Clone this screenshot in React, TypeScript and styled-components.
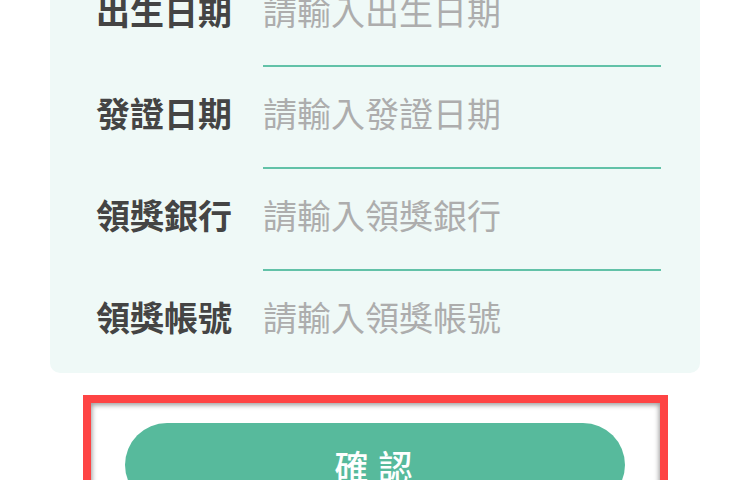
import React from 'react';
import styled, { createGlobalStyle } from 'styled-components';

const GlobalStyle = createGlobalStyle`
  html, body {
    margin: 0;
    padding: 0;
    overflow: hidden;
    background: #ffffff;
  }
  body {
    font-family: 'Noto Sans CJK TC', 'Noto Sans', sans-serif;
  }
`;

const Page = styled.div`
  display: flex;
  flex-direction: column;
  align-items: center;
  margin-top: -55px;
`;

const FormCard = styled.div`
  width: 650px;
  box-sizing: border-box;
  padding: 20px 39px 0 46px;
  background-color: #eff9f7;
  border-radius: 10px;
`;

const FieldRow = styled.div`
  display: flex;
  align-items: center;
`;

const FieldLabel = styled.label`
  flex: none;
  width: 136px;
  margin-right: 31px;
  padding-bottom: 10px;
  font-size: 34px;
  line-height: 1;
  font-weight: 700;
  color: #444444;
  white-space: nowrap;
`;

const FieldInput = styled.input<{ $last?: boolean }>`
  flex: 1;
  min-width: 0;
  height: 102px;
  box-sizing: border-box;
  padding: 0 0 10px;
  border: none;
  border-bottom: 2px solid ${(p) => (p.$last ? 'transparent' : '#62c2a8')};
  background: transparent;
  outline: none;
  font-family: inherit;
  font-size: 34px;
  color: #333333;
  &::placeholder {
    color: #adadad;
  }
`;

const HighlightFrame = styled.div`
  margin-top: 22px;
  width: 585px;
  box-sizing: border-box;
  padding: 20px 34px;
  border: 8px solid #fe4444;
  box-shadow: inset 0 1px 5px 1px rgba(0, 0, 0, 0.4);
  background: #ffffff;
`;

const ConfirmButton = styled.button`
  display: block;
  width: 500px;
  height: 84px;
  border: none;
  border-radius: 42px;
  background-color: #57ba9c;
  color: #ffffff;
  font-family: inherit;
  font-size: 34px;
  font-weight: 500;
  letter-spacing: 10px;
  padding: 0 0 0 8px;
  cursor: pointer;
`;

const fields = [
  { label: '出生日期', placeholder: '請輸入出生日期' },
  { label: '發證日期', placeholder: '請輸入發證日期' },
  { label: '領獎銀行', placeholder: '請輸入領獎銀行' },
  { label: '領獎帳號', placeholder: '請輸入領獎帳號' },
];

const App = () => (
  <>
    <GlobalStyle />
    <Page>
      <FormCard>
        {fields.map((field, index) => (
          <FieldRow key={field.label}>
            <FieldLabel>{field.label}</FieldLabel>
            <FieldInput placeholder={field.placeholder} $last={index === fields.length - 1} />
          </FieldRow>
        ))}
      </FormCard>
      <HighlightFrame>
        <ConfirmButton>確認</ConfirmButton>
      </HighlightFrame>
    </Page>
  </>
);

export default App;
